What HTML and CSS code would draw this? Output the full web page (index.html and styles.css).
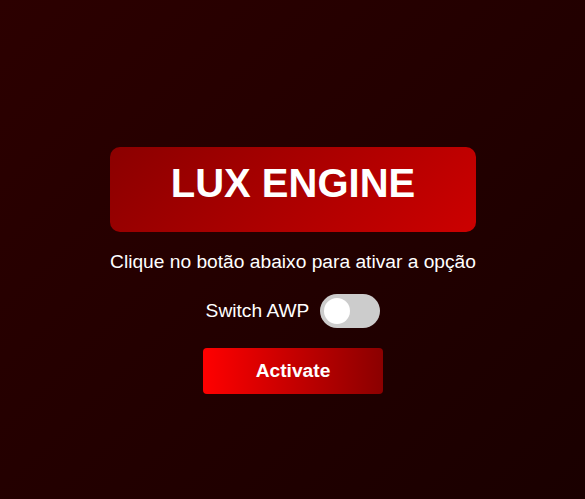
FILE: index.html
```html
<!DOCTYPE html>
<html lang="pt">
<head>
<meta charset="utf-8">
<title>LUX ENGINE</title>
<link rel="stylesheet" href="styles.css">
</head>
<body>
<main class="panel">
  <header class="brand"><h1 class="brand-title">LUX ENGINE</h1></header>
  <p class="hint">Clique no botão abaixo para ativar a opção</p>
  <div class="switch-row">
    <span class="switch-label">Switch AWP</span>
    <label class="toggle"><input type="checkbox" class="toggle-input"><span class="toggle-knob"></span></label>
  </div>
  <button class="activate" type="button">Activate</button>
</main>
</body>
</html>
```

FILE: styles.css
```css
html, body {
  margin: 0;
  height: 100%;
}
body {
  background: linear-gradient(135deg, #2c0000 0%, #1a0000 100%);
  font-family: "Liberation Sans", Arial, sans-serif;
  color: #fff;
  padding: 147px 0 0 1px;
  box-sizing: border-box;
}
.panel {
  width: max-content;
  margin: 0 auto;
  display: flex;
  flex-direction: column;
  align-items: center;
}
.brand {
  align-self: stretch;
  background: linear-gradient(135deg, #8b0000 0%, #cc0000 100%);
  border-radius: 10px;
  padding: 13px 0 26px;
  text-align: center;
}
.brand-title {
  margin: 0;
  font-size: 40px;
  line-height: 46px;
  font-weight: bold;
}
.hint {
  margin: 19px 0 0;
  font-size: 19.2px;
  line-height: 22px;
}
.switch-row {
  margin-top: 21px;
  display: flex;
  align-items: center;
  gap: 11px;
  font-size: 19.2px;
}
.toggle {
  position: relative;
  display: block;
  width: 60px;
  height: 34px;
  border-radius: 17px;
  background: #ccc;
}
.toggle-input {
  position: absolute;
  opacity: 0;
  width: 0;
  height: 0;
}
.toggle-knob {
  position: absolute;
  left: 4px;
  top: 4px;
  width: 26px;
  height: 26px;
  border-radius: 50%;
  background: #fff;
}
.activate {
  margin-top: 20px;
  width: 180px;
  height: 46px;
  border: none;
  border-radius: 4px;
  background: linear-gradient(90deg, #ff0000 0%, #8b0000 100%);
  color: #fff;
  font-family: "Liberation Sans", Arial, sans-serif;
  font-size: 19.2px;
  font-weight: bold;
  padding: 0;
}
```
